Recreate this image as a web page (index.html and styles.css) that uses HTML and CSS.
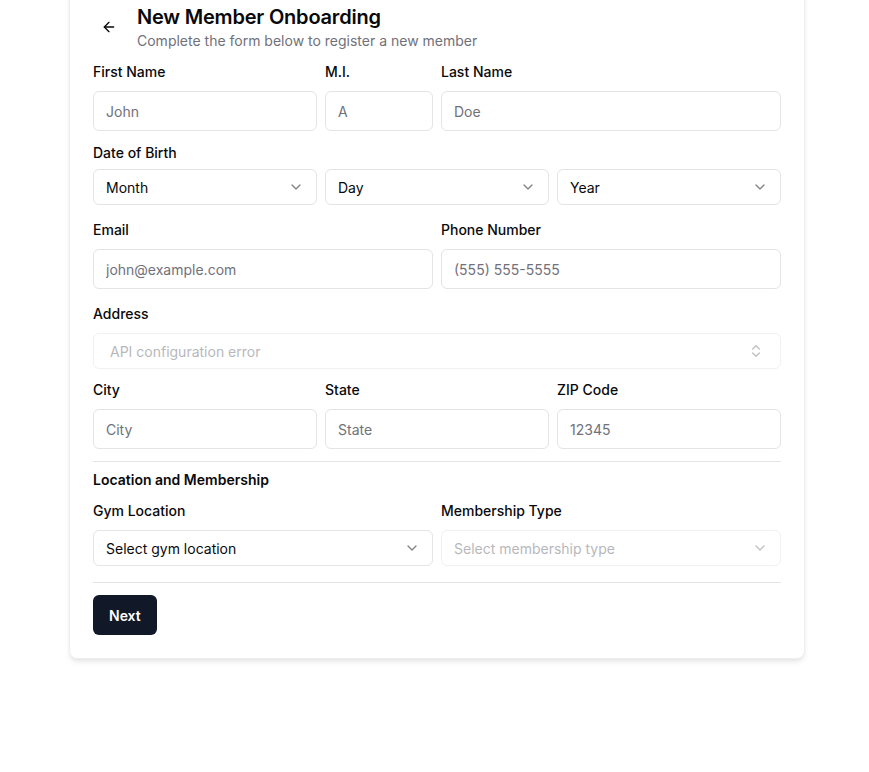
FILE: index.html
```html
<!DOCTYPE html>
<html lang="en">
<head>
<meta charset="utf-8">
<title>New Member Onboarding</title>
<link rel="stylesheet" href="styles.css">
</head>
<body>
<div class="page">
  <div class="card">
    <div class="header">
      <button class="back" type="button" aria-label="Back">
        <svg width="16" height="16" viewBox="0 0 24 24" fill="none" stroke="currentColor" stroke-width="2" stroke-linecap="round" stroke-linejoin="round"><path d="m12 19-7-7 7-7"/><path d="M19 12H5"/></svg>
      </button>
      <div class="titles">
        <h1 class="title">New Member Onboarding</h1>
        <p class="subtitle">Complete the form below to register a new member</p>
      </div>
    </div>

    <div class="row row-name">
      <div class="field"><label class="label">First Name</label><input class="input" placeholder="John"></div>
      <div class="field"><label class="label">M.I.</label><input class="input" placeholder="A"></div>
      <div class="field"><label class="label">Last Name</label><input class="input" placeholder="Doe"></div>
    </div>

    <div class="section dob">
      <label class="label label-dob">Date of Birth</label>
      <div class="row row-3">
        <div class="select"><span>Month</span><svg class="chev" width="16" height="16" viewBox="0 0 24 24" fill="none" stroke="currentColor" stroke-width="2" stroke-linecap="round" stroke-linejoin="round"><path d="m6 9 6 6 6-6"/></svg></div>
        <div class="select"><span>Day</span><svg class="chev" width="16" height="16" viewBox="0 0 24 24" fill="none" stroke="currentColor" stroke-width="2" stroke-linecap="round" stroke-linejoin="round"><path d="m6 9 6 6 6-6"/></svg></div>
        <div class="select"><span>Year</span><svg class="chev" width="16" height="16" viewBox="0 0 24 24" fill="none" stroke="currentColor" stroke-width="2" stroke-linecap="round" stroke-linejoin="round"><path d="m6 9 6 6 6-6"/></svg></div>
      </div>
    </div>

    <div class="row row-2 gap-18">
      <div class="field"><label class="label">Email</label><input class="input" placeholder="john@example.com"></div>
      <div class="field"><label class="label">Phone Number</label><input class="input" placeholder="(555) 555-5555"></div>
    </div>

    <div class="field gap-18">
      <label class="label">Address</label>
      <div class="select select-disabled address">
        <span class="ph">API configuration error</span>
        <svg class="chev" width="16" height="16" viewBox="0 0 24 24" fill="none" stroke="currentColor" stroke-width="2" stroke-linecap="round" stroke-linejoin="round"><path d="m7 15 5 5 5-5"/><path d="m7 9 5-5 5 5"/></svg>
      </div>
    </div>

    <div class="row row-3 gap-14">
      <div class="field"><label class="label">City</label><input class="input" placeholder="City"></div>
      <div class="field"><label class="label">State</label><input class="input" placeholder="State"></div>
      <div class="field"><label class="label">ZIP Code</label><input class="input" placeholder="12345"></div>
    </div>

    <hr class="sep sep-1">

    <h2 class="section-title">Location and Membership</h2>

    <div class="row row-2 gap-17">
      <div class="field"><label class="label">Gym Location</label>
        <div class="select"><span>Select gym location</span><svg class="chev" width="16" height="16" viewBox="0 0 24 24" fill="none" stroke="currentColor" stroke-width="2" stroke-linecap="round" stroke-linejoin="round"><path d="m6 9 6 6 6-6"/></svg></div>
      </div>
      <div class="field"><label class="label">Membership Type</label>
        <div class="select select-disabled"><span class="ph">Select membership type</span><svg class="chev" width="16" height="16" viewBox="0 0 24 24" fill="none" stroke="currentColor" stroke-width="2" stroke-linecap="round" stroke-linejoin="round"><path d="m6 9 6 6 6-6"/></svg></div>
      </div>
    </div>

    <hr class="sep sep-2">

    <div class="actions">
      <button class="btn" type="button">Next</button>
    </div>
  </div>
</div>
</body>
</html>
```

FILE: styles.css
```css
* { box-sizing: border-box; }
html, body { margin: 0; padding: 0; background: #ffffff; }
body {
  font-family: Inter, "Noto Sans", "Liberation Sans", sans-serif;
  color: #09090b;
  -webkit-font-smoothing: antialiased;
}
.page {
  padding-left: 69px;
  overflow: hidden;
  padding-bottom: 40px;
}
.card {
  width: 736px;
  margin-top: -22px;
  background: #fff;
  border: 1px solid #eeeef0;
  border-radius: 8px;
  box-shadow: 0 4px 6px -1px rgba(0,0,0,0.08), 0 2px 4px -2px rgba(0,0,0,0.08);
  padding: 23px 23px 23px 23px;
  display: flex;
  flex-direction: column;
}
.header {
  display: flex;
  align-items: center;
  gap: 12px;
  margin-top: 1px;
}
.back {
  width: 32px;
  height: 32px;
  border: 0;
  background: transparent;
  padding: 0;
  display: flex;
  align-items: center;
  justify-content: center;
  color: #09090b;
  border-radius: 6px;
}
.titles { display: flex; flex-direction: column; }
.title {
  margin: 0;
  font-size: 20px;
  line-height: 28px;
  font-weight: 600;
  letter-spacing: -0.2px;
}
.subtitle {
  margin: 0;
  font-size: 14px;
  line-height: 20px;
  color: #71717a;
}
.row { display: grid; gap: 8px; }
.row-name { grid-template-columns: 224px 108px 1fr; margin-top: 14px; }
.row-3 { grid-template-columns: 1fr 1fr 1fr; }
.row-2 { grid-template-columns: 1fr 1fr; }
.field { display: flex; flex-direction: column; }
.label {
  font-size: 14px;
  line-height: 14px;
  font-weight: 450;
  margin-bottom: 12px;
  color: #09090b;
}
.dob { margin-top: 15px; }
.label-dob { display: block; margin-bottom: 9px; }
.gap-18 { margin-top: 18px; }
.gap-14 { margin-top: 14px; }
.gap-17 { margin-top: 17px; }
.input {
  height: 40px;
  width: 100%;
  border: 1px solid #e4e4e7;
  border-radius: 6px;
  padding: 0 12px;
  font-family: inherit;
  font-size: 14px;
  color: #09090b;
  background: #fff;
  outline: none;
}
.input::placeholder { color: #71717a; opacity: 1; }
.select {
  height: 36px;
  border: 1px solid #e4e4e7;
  border-radius: 6px;
  padding: 0 12px;
  display: flex;
  align-items: center;
  justify-content: space-between;
  font-size: 14px;
  color: #09090b;
  background: #fff;
}
.chev { color: #09090b; opacity: 0.5; flex: none; }
.select-disabled { opacity: 0.5; }
.select-disabled .ph { color: #71717a; }
.address { padding-left: 16px; padding-right: 16px; }
.sep {
  border: 0;
  height: 1px;
  background: #e4e4e7;
  margin: 0;
}
.sep-1 { margin-top: 12px; }
.section-title {
  margin: 11px 0 0 0;
  font-size: 14px;
  line-height: 14px;
  font-weight: 600;
}
.sep-2 { margin-top: 16px; }
.actions { margin-top: 12px; display: flex; }
.btn {
  height: 40px;
  padding: 0 16px;
  border: 0;
  border-radius: 6px;
  background: #111827;
  color: #fff;
  font-family: inherit;
  font-size: 14px;
  font-weight: 600;
}
```
